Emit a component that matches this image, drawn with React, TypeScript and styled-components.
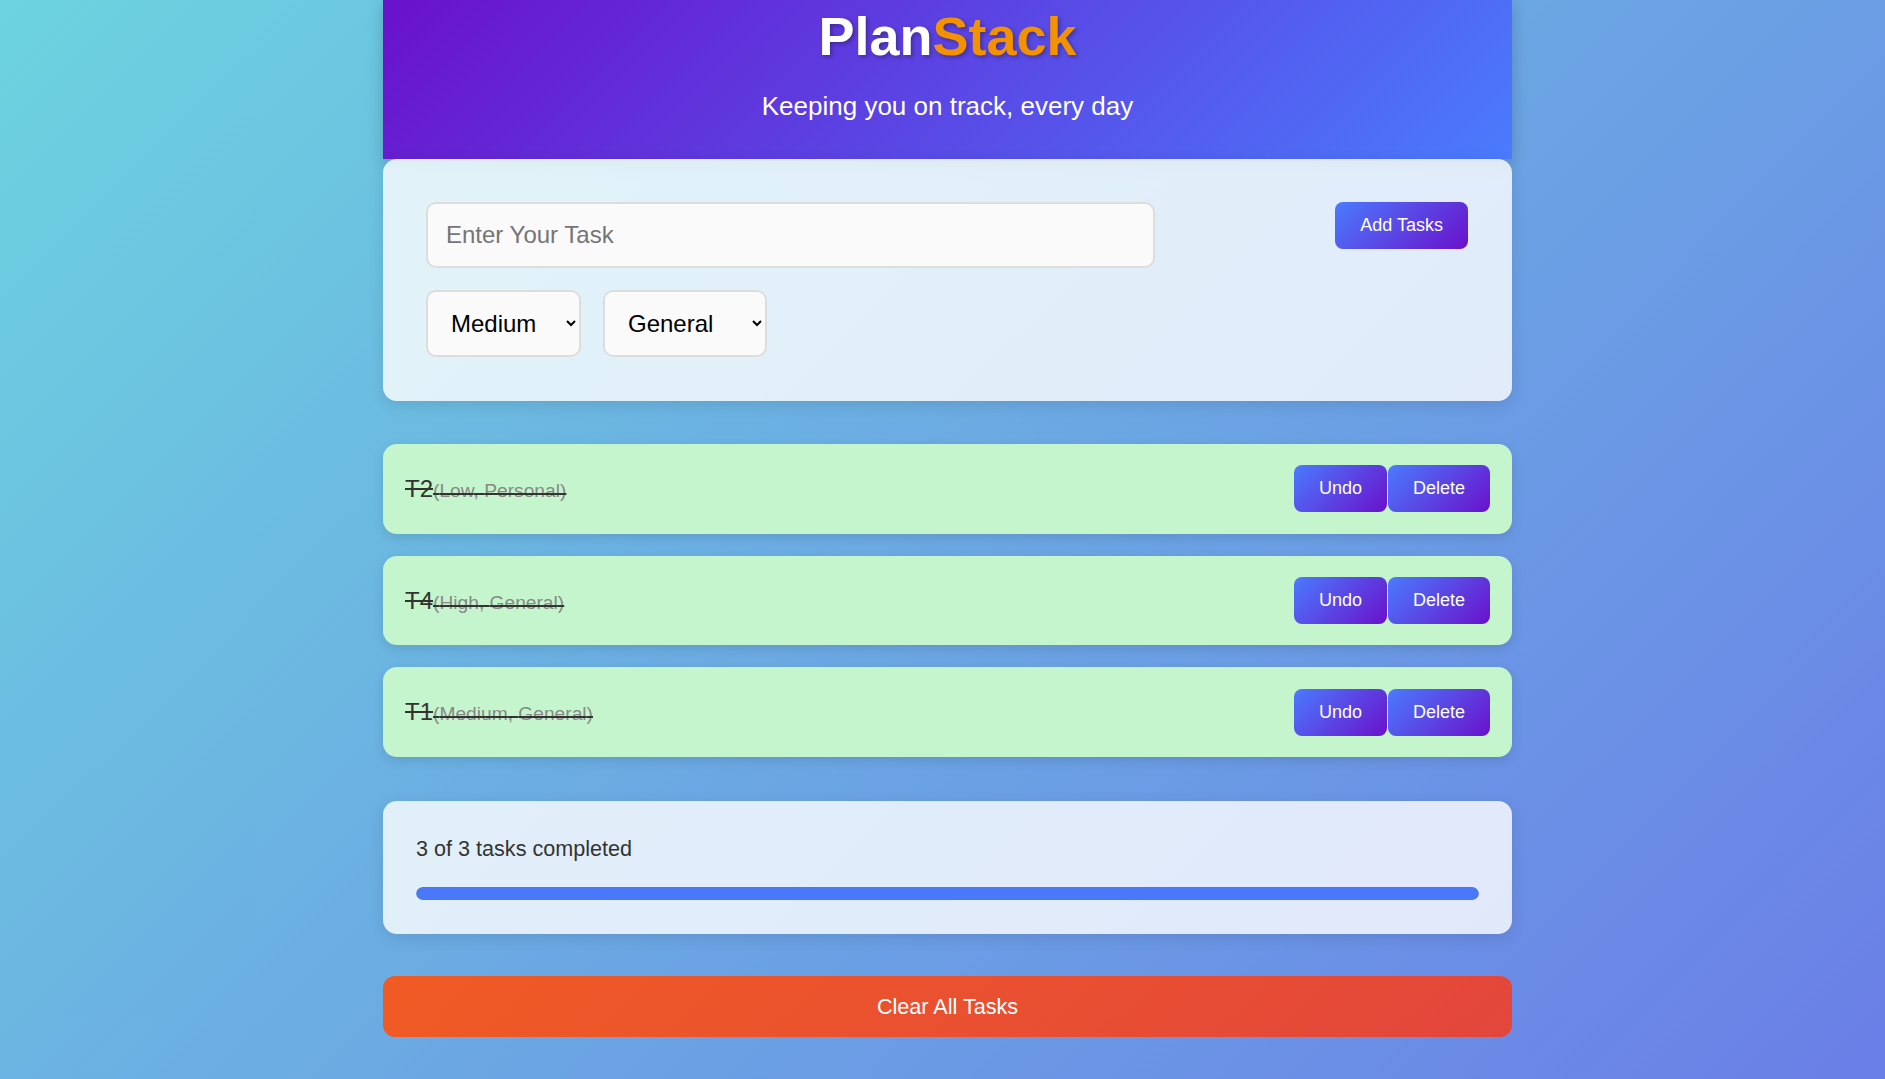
import React from 'react';
import styled, { createGlobalStyle } from 'styled-components';

const GlobalStyle = createGlobalStyle`
  html, body {
    margin: 0;
    padding: 0;
    min-height: 100%;
  }
  body {
    font-family: "Liberation Sans", Arial, sans-serif;
    background: linear-gradient(135deg, #6cd3df 0%, #6a7ee7 100%);
    min-height: 100vh;
  }
`;

const Page = styled.div`
  min-height: 100vh;
  box-sizing: border-box;
  padding: 0 0 42px 10px;
`;

const Container = styled.main`
  width: 1129px;
  margin: 0 auto;
  display: flex;
  flex-direction: column;
`;

const Header = styled.header`
  background: linear-gradient(135deg, #6a11cb 0%, #4a7bfd 100%);
  padding: 5px 0 37px;
  text-align: center;
  box-shadow: 0 4px 15px rgba(0, 0, 0, 0.2);
`;

const Title = styled.h1`
  margin: 0;
  font-size: 54px;
  font-weight: 700;
  line-height: normal;
  color: #fff;
  text-shadow: 2px 2px 4px rgba(0, 0, 0, 0.3);
`;

const Accent = styled.span`
  color: #f39200;
`;

const Subtitle = styled.p`
  margin: 24px 0 0;
  font-size: 26px;
  line-height: normal;
  color: #fff;
`;

const Card = styled.section`
  background: rgba(255, 255, 255, 0.8);
  border-radius: 14px;
  box-shadow: 0 4px 15px rgba(0, 0, 0, 0.1);
`;

const FormCard = styled(Card)`
  padding: 43px 44px 44px 43px;
  display: flex;
  justify-content: space-between;
  align-items: flex-start;
`;

const Fields = styled.div`
  display: flex;
  flex-direction: column;
  gap: 22px;
`;

const TaskInput = styled.input`
  width: 729px;
  height: 66px;
  box-sizing: border-box;
  padding: 0 18px;
  border: 2px solid #ddd;
  border-radius: 10px;
  background: #fafafa;
  font-family: inherit;
  font-size: 24px;
  color: #333;
  outline: none;
  &::placeholder {
    color: #757575;
  }
`;

const SelectRow = styled.div`
  display: flex;
  gap: 22px;
`;

const Select = styled.select<{ $width: number }>`
  width: ${(p) => p.$width}px;
  height: 67px;
  box-sizing: border-box;
  padding: 0 23px 0 19px;
  border: 2px solid #ddd;
  border-radius: 10px;
  background: #fafafa;
  font-family: inherit;
  font-size: 24px;
  color: #000;
`;

const GradientButton = styled.button`
  height: 47px;
  padding: 0 25px;
  border: none;
  border-radius: 8px;
  background: linear-gradient(135deg, #4a7bfd 0%, #6a11cb 100%);
  color: #fff;
  font-family: inherit;
  font-size: 18px;
  cursor: pointer;
`;

const TaskList = styled.ul`
  list-style: none;
  margin: 43px 0 0;
  padding: 0;
  display: flex;
  flex-direction: column;
  gap: 22px;
`;

const TaskItem = styled.li<{ $done: boolean }>`
  height: 89.7px;
  box-sizing: border-box;
  padding: 0 22px;
  display: flex;
  align-items: center;
  justify-content: space-between;
  background: ${(p) => (p.$done ? '#c5f5cc' : 'rgba(255, 255, 255, 0.8)')};
  border-radius: 14px;
  box-shadow: 0 4px 12px rgba(0, 0, 0, 0.1);
`;

const TaskText = styled.span<{ $done: boolean }>`
  font-size: 24px;
  color: #333;
  text-decoration: ${(p) => (p.$done ? 'line-through' : 'none')};
`;

const TaskMeta = styled.span`
  font-size: 0.8em;
  color: #888;
`;

const Actions = styled.div`
  display: flex;
  gap: 1px;
`;

const ProgressCard = styled(Card)`
  margin-top: 44px;
  padding: 35px 33px 34px;
`;

const ProgressText = styled.p`
  margin: 0 0 25px;
  font-size: 21.6px;
  line-height: normal;
  color: #333;
`;

const Track = styled.div`
  height: 13px;
  border-radius: 7px;
  background: #ddd;
  overflow: hidden;
`;

const Fill = styled.div`
  height: 100%;
  background: #4a78fb;
  border-radius: inherit;
`;

const ClearButton = styled.button`
  margin-top: 42px;
  width: 100%;
  height: 61px;
  border: none;
  border-radius: 12px;
  background: linear-gradient(135deg, #f05b24 0%, #e3463b 100%);
  color: #fff;
  font-family: inherit;
  font-size: 21.6px;
  cursor: pointer;
`;

type Task = { id: number; text: string; priority: string; category: string; done: boolean };

const tasks: Task[] = [
  { id: 2, text: 'T2', priority: 'Low', category: 'Personal', done: true },
  { id: 4, text: 'T4', priority: 'High', category: 'General', done: true },
  { id: 1, text: 'T1', priority: 'Medium', category: 'General', done: true },
];

export default function App() {
  const completed = tasks.filter((t) => t.done).length;
  const pct = tasks.length ? (completed / tasks.length) * 100 : 0;
  return (
    <Page>
      <GlobalStyle />
      <Container>
        <Header>
          <Title>
            Plan<Accent>Stack</Accent>
          </Title>
          <Subtitle>Keeping you on track, every day</Subtitle>
        </Header>

        <FormCard>
          <Fields>
            <TaskInput type="text" placeholder="Enter Your Task" />
            <SelectRow>
              <Select $width={155} defaultValue="Medium">
                <option>Low</option>
                <option>Medium</option>
                <option>High</option>
              </Select>
              <Select $width={164} defaultValue="General">
                <option>General</option>
                <option>Work</option>
                <option>Personal</option>
              </Select>
            </SelectRow>
          </Fields>
          <GradientButton>Add Tasks</GradientButton>
        </FormCard>

        <TaskList>
          {tasks.map((t) => (
            <TaskItem key={t.id} $done={t.done}>
              <TaskText $done={t.done}>
                {t.text}
                <TaskMeta>
                  ({t.priority}, {t.category})
                </TaskMeta>
              </TaskText>
              <Actions>
                <GradientButton>{t.done ? 'Undo' : 'Done'}</GradientButton>
                <GradientButton>Delete</GradientButton>
              </Actions>
            </TaskItem>
          ))}
        </TaskList>

        <ProgressCard>
          <ProgressText>
            {completed} of {tasks.length} tasks completed
          </ProgressText>
          <Track>
            <Fill style={{ width: `${pct}%` }} />
          </Track>
        </ProgressCard>

        <ClearButton>Clear All Tasks</ClearButton>
      </Container>
    </Page>
  );
}
